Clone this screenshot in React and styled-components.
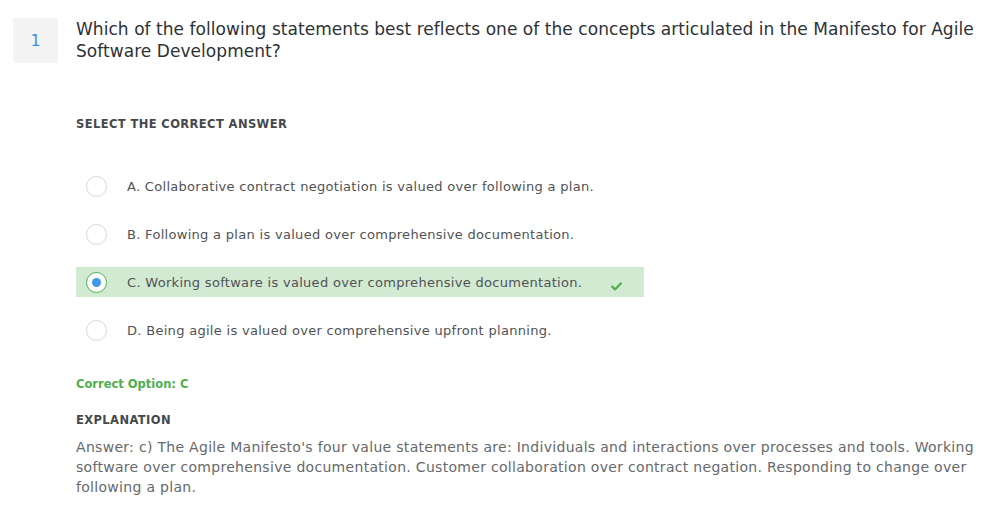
import styled, { createGlobalStyle } from "styled-components";

const GlobalStyle = createGlobalStyle`
    body {
        margin: 0;
        background: #ffffff;
        font-family: "DejaVu Sans", "Liberation Sans", sans-serif;
    }
`;

const options = [
    { key: "A", text: "Collaborative contract negotiation is valued over following a plan." },
    { key: "B", text: "Following a plan is valued over comprehensive documentation." },
    { key: "C", text: "Working software is valued over comprehensive documentation." },
    { key: "D", text: "Being agile is valued over comprehensive upfront planning." },
];

const correct = "C";

const App = () => {
    return (
        <>
            <GlobalStyle />
            <Page>
                <Header>
                    <Number>1</Number>
                    <Question>
                        Which of the following statements best reflects one of the concepts articulated in the Manifesto for Agile Software Development?
                    </Question>
                </Header>
                <Body>
                    <Label>Select the correct answer</Label>
                    <Options>
                        {options.map((o) => (
                            <Option key={o.key} correct={o.key === correct}>
                                <Radio checked={o.key === correct} />
                                <OptionText>
                                    {o.key}. {o.text}
                                </OptionText>
                                {o.key === correct && (
                                    <Check width="11" height="9" viewBox="0 0 11 9">
                                        <path d="M1.2 4.6 L4 7.4 L9.8 1.4" fill="none" stroke="#4caf50" strokeWidth="2.2" strokeLinecap="round" strokeLinejoin="round" />
                                    </Check>
                                )}
                            </Option>
                        ))}
                    </Options>
                    <CorrectOption>Correct Option: {correct}</CorrectOption>
                    <Label small>Explanation</Label>
                    <Explanation>
                        Answer: c) The Agile Manifesto's four value statements are: Individuals and interactions over processes and tools. Working software over comprehensive documentation. Customer collaboration over contract negation. Responding to change over following a plan.
                    </Explanation>
                </Body>
            </Page>
        </>
    );
};

const Page = styled.div`
    padding: 17px 20px 0 13px;
`;

const Header = styled.div`
    display: flex;
    align-items: flex-start;
    gap: 18px;
`;

const Number = styled.div`
    flex: none;
    width: 45px;
    height: 45px;
    margin-top: 1px;
    background: #f4f4f4;
    color: #2f8df0;
    font-size: 15px;
    display: flex;
    align-items: center;
    justify-content: center;
`;

const Question = styled.div`
    padding-top: 1px;
    font-size: 17px;
    line-height: 22px;
    color: #2d3138;
    letter-spacing: 0.05px;
`;

const Body = styled.div`
    padding-left: 63px;
`;

const Label = styled.div`
    margin-top: ${(p) => (p.small ? "20px" : "53px")};
    font-size: 11.5px;
    line-height: 16px;
    font-weight: 600;
    text-transform: uppercase;
    color: #45484d;
    letter-spacing: 0.4px;
`;

const Options = styled.div`
    margin-top: 39px;
    display: flex;
    flex-direction: column;
    gap: 18px;
`;

const Option = styled.div`
    width: 568px;
    height: 30px;
    box-sizing: border-box;
    padding: 0 22px 0 10px;
    display: flex;
    align-items: center;
    background: ${(p) => (p.correct ? "#d3ead2" : "transparent")};
`;

const Radio = styled.span`
    flex: none;
    width: 21px;
    height: 21px;
    box-sizing: border-box;
    border-radius: 50%;
    border: 1px solid ${(p) => (p.checked ? "#4caf50" : "#d6d6d6")};
    background: #ffffff;
    display: flex;
    align-items: center;
    justify-content: center;
    &::after {
        content: "";
        display: ${(p) => (p.checked ? "block" : "none")};
        width: 9px;
        height: 9px;
        border-radius: 50%;
        background: #3d9be9;
    }
`;

const OptionText = styled.span`
    margin-left: 20px;
    font-size: 13px;
    color: #4f5257;
    letter-spacing: 0.3px;
`;

const Check = styled.svg`
    margin-left: auto;
    margin-top: 9px;
`;

const CorrectOption = styled.div`
    margin-top: 31px;
    font-size: 11.5px;
    line-height: 16px;
    font-weight: 600;
    color: #4caf50;
`;

const Explanation = styled.div`
    margin-top: 9px;
    font-size: 14px;
    line-height: 20px;
    color: #66696e;
    letter-spacing: 0.3px;
`;

export default App;
